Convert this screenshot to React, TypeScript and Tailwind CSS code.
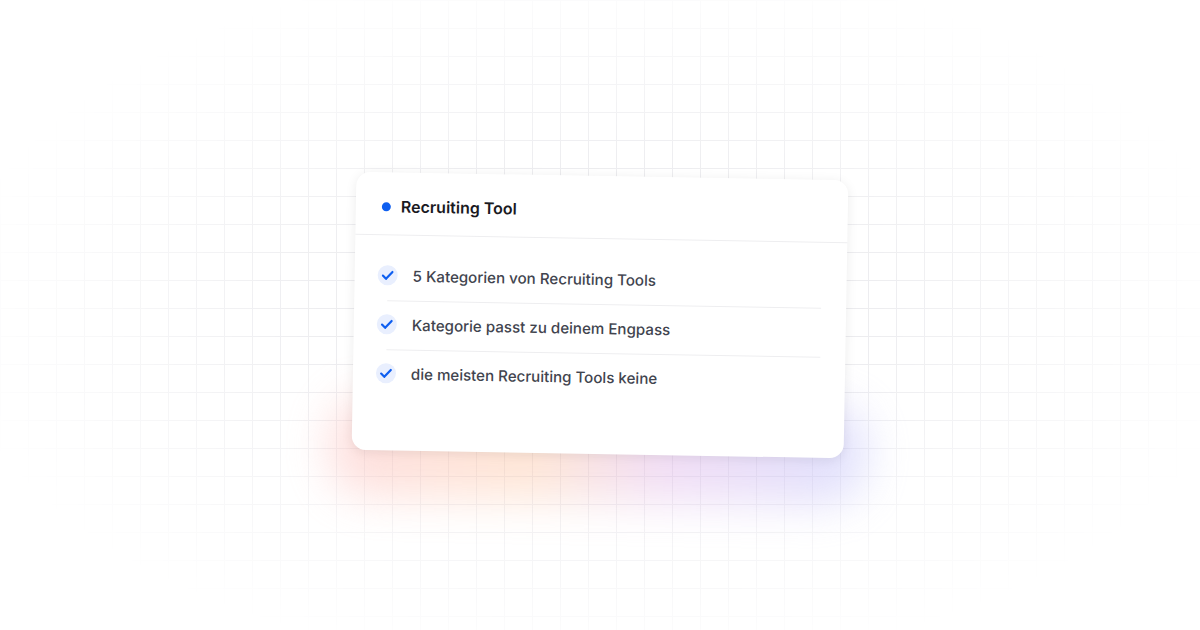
const items = [
  "5 Kategorien von Recruiting Tools",
  "Kategorie passt zu deinem Engpass",
  "die meisten Recruiting Tools keine",
];

const App = () => {
  return (
    <div className="relative flex h-[630px] w-[1200px] items-center justify-center overflow-hidden bg-white font-['Inter',sans-serif]">
      {/* grid, fades out towards the edges */}
      <div className="absolute inset-0 bg-[linear-gradient(to_right,#ebebee_1px,transparent_1px),linear-gradient(to_bottom,#ebebee_1px,transparent_1px)] bg-[size:28px_28px] [mask-image:radial-gradient(ellipse_660px_360px_at_center,#000_35%,transparent_100%)]" />

      <div className="relative h-[278px] w-[492px] rotate-[1deg]">
        {/* glow under the card */}
        <div className="absolute bottom-[-46px] left-[-22px] right-[-22px] h-[100px] rounded-[40px] bg-[linear-gradient(to_right,#fcb8b8,#fdc8a4_38%,#e0b4e8_62%,#b8bcfa)] opacity-45 blur-[22px]" />

        <div className="relative h-full w-full rounded-[14px] bg-white shadow-[0_2px_12px_rgba(0,0,0,0.08)]">
          <div className="flex h-[63px] items-center gap-[10px] border-b border-[#eeeef0] pl-[26px] pt-[6px]">
            <span className="h-[9px] w-[9px] rounded-full bg-[#0f5ff0]" />
            <span className="text-[16px] font-semibold text-[#1a1a1f]">Recruiting Tool</span>
          </div>
          <ul className="pl-[23px] pr-[25px] pt-[17px]">
            {items.map((item, i) => (
              <li key={item}>
                <div className="flex h-[47px] items-center gap-[15px]">
                  <span className="-mt-[2px] flex h-5 w-5 shrink-0 items-center justify-center rounded-full bg-[#e9effe]">
                    <svg width="12" height="12" viewBox="0 0 12 12" fill="none">
                      <path d="M1.2 6.4L4.4 9.6L10.8 2.6" stroke="#0f5ff0" strokeWidth="2.2" strokeLinecap="round" strokeLinejoin="round" />
                    </svg>
                  </span>
                  <span className="mt-[2px] text-[15.12px] font-medium text-[#41444e]">{item}</span>
                </div>
                {i < 2 && <div className="ml-[10px] mt-px h-px bg-[#eeeef0]" />}
              </li>
            ))}
          </ul>
        </div>
      </div>
    </div>
  );
};

export default App;
